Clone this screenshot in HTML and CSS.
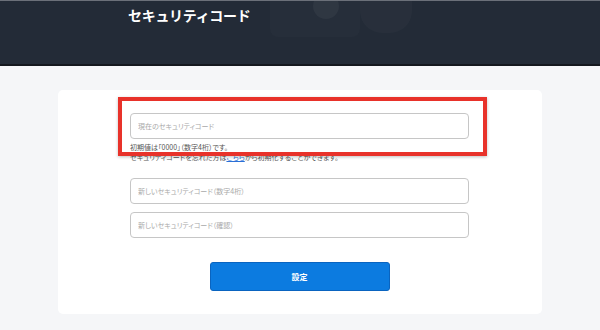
FILE: index.html
```html
<!DOCTYPE html>
<html lang="ja">
<head>
    <meta charset="UTF-8">
    <meta name="viewport" content="width=device-width, initial-scale=1.0">
    <title>セキュリティコード</title>
    <link rel="stylesheet" href="styles.css">
</head>
<body>
    <header class="page-header">
        <svg class="header-deco" width="180" height="40" viewBox="0 0 180 40">
            <rect x="0" y="-20" width="90" height="56" rx="8" fill="#ffffff" fill-opacity="0.015"/>
            <circle cx="56" cy="5" r="13" fill="#ffffff" fill-opacity="0.045"/>
            <rect x="90" y="-30" width="52" height="62" rx="22" fill="#ffffff" fill-opacity="0.025"/>
        </svg>
        <h1>セキュリティコード</h1>
    </header>

    <main class="content">
        <div class="card">
            <div class="form-group current">
                <input type="text" placeholder="現在のセキュリティコード">
                <p class="note">初期値は「0000」（数字4桁）です。</p>
                <p class="note">セキュリティコードを忘れた方は<a href="#">こちら</a>から初期化することができます。</p>
                <div class="highlight"></div>
            </div>
            <div class="form-group">
                <input type="text" placeholder="新しいセキュリティコード（数字4桁）">
            </div>
            <div class="form-group">
                <input type="text" placeholder="新しいセキュリティコード（確認）">
            </div>
            <button class="btn">設定</button>
        </div>
    </main>
</body>
</html>
```

FILE: styles.css
```css
body, h1, p, input, button {
    margin: 0;
    padding: 0;
    font-family: 'Noto Sans CJK JP', 'Noto Sans', sans-serif;
}

body {
    background: #f5f6f8;
    width: 600px;
    height: 330px;
    overflow: hidden;
}

.page-header {
    position: relative;
    height: 63px;
    background: #232b37;
    border-top: 1px solid #6b7079;
    border-bottom: 2px solid #14181e;
    overflow: hidden;
}

.header-deco {
    position: absolute;
    left: 270px;
    top: 0;
}

.page-header h1 {
    position: relative;
    padding: 4px 0 0 128px;
    color: #fff;
    font-size: 14px;
    font-weight: bold;
    letter-spacing: -0.3px;
    line-height: 20px;
}

.content {
    padding: 24px 58px 0;
}

.card {
    background: #fff;
    border-radius: 5px;
    height: 224px;
    padding: 23px 73px 0 72px;
    box-sizing: border-box;
    display: flex;
    flex-direction: column;
}

.form-group {
    margin-bottom: 8px;
}

.form-group.current {
    position: relative;
    margin-bottom: 16px;
}

.form-group input {
    display: block;
    width: 100%;
    height: 26px;
    box-sizing: border-box;
    border: 1px solid #c6c6c6;
    border-radius: 4px;
    padding: 0 7px;
    font-size: 7px;
    font-feature-settings: "palt";
    color: #333;
}

.form-group input::placeholder {
    color: #a9a9a9;
}

.note {
    font-size: 7px;
    font-feature-settings: "palt";
    color: #555;
    line-height: 10px;
}

.note:first-of-type {
    margin-top: 3px;
}

.note a {
    color: #2a6fd6;
    text-decoration: underline;
}

.highlight {
    position: absolute;
    left: -12px;
    top: -16px;
    width: 369px;
    height: 59px;
    box-sizing: border-box;
    border: 4px solid #e8322a;
    box-shadow: 0 1px 3px rgba(0, 0, 0, 0.25);
    pointer-events: none;
}

.btn {
    align-self: center;
    margin-top: 16px;
    width: 180px;
    height: 29px;
    background: #0c7be0;
    border: 1px solid #0a64c0;
    border-radius: 3px;
    color: #fff;
    font-size: 8px;
    font-weight: bold;
    cursor: pointer;
}
```
